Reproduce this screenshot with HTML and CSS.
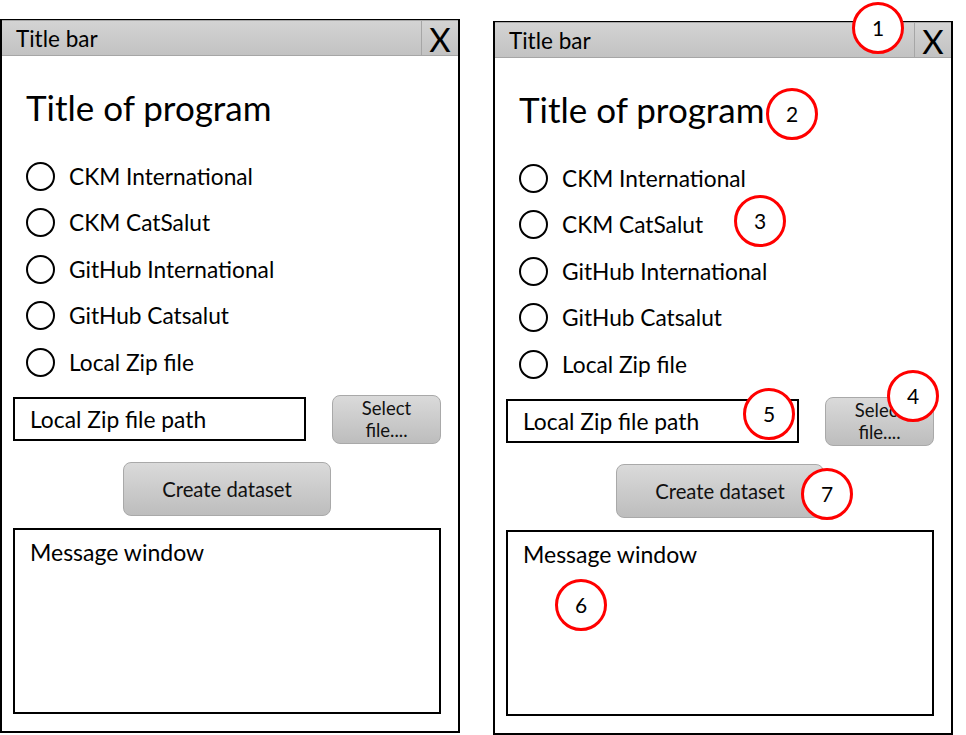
FILE: index.html
```html
<!DOCTYPE html>
<html lang="en">
<head>
<meta charset="utf-8">
<title>Mockup</title>
<link rel="stylesheet" href="styles.css">
</head>
<body>
<div class="stage">
  <section class="window w-left">
    <header class="titlebar"><span class="tb-text">Title bar</span><span class="close">X</span></header>
    <div class="content">
      <h1 class="app-title">Title of program</h1>
      <ul class="radios">
        <li><span class="radio"></span>CKM International</li>
        <li><span class="radio"></span>CKM CatSalut</li>
        <li><span class="radio"></span>GitHub International</li>
        <li><span class="radio"></span>GitHub Catsalut</li>
        <li><span class="radio"></span>Local Zip file</li>
      </ul>
      <div class="file-row">
        <div class="path">Local Zip file path</div>
        <div class="btn select">Select<br>file....</div>
      </div>
      <div class="create-row"><div class="btn create">Create dataset</div></div>
      <div class="messages">Message window</div>
    </div>
  </section>

  <section class="window w-right">
    <header class="titlebar"><span class="tb-text">Title bar</span><span class="close">X</span></header>
    <div class="content">
      <h1 class="app-title">Title of program</h1>
      <ul class="radios">
        <li><span class="radio"></span>CKM International</li>
        <li><span class="radio"></span>CKM CatSalut</li>
        <li><span class="radio"></span>GitHub International</li>
        <li><span class="radio"></span>GitHub Catsalut</li>
        <li><span class="radio"></span>Local Zip file</li>
      </ul>
      <div class="file-row">
        <div class="path">Local Zip file path</div>
        <div class="btn select">Select<br>file....</div>
      </div>
      <div class="create-row"><div class="btn create">Create dataset</div></div>
      <div class="messages">Message window</div>
    </div>
  </section>

  <span class="mark m1">1</span>
  <span class="mark m2">2</span>
  <span class="mark m3">3</span>
  <span class="mark m4">4</span>
  <span class="mark m5">5</span>
  <span class="mark m6">6</span>
  <span class="mark m7">7</span>
</div>
</body>
</html>
```

FILE: styles.css
```css
* { box-sizing: border-box; }
html, body { margin: 0; padding: 0; background: #fff; }
body {
  font-family: Lato, "Open Sans", sans-serif;
  color: #000;
}
.stage {
  position: relative;
  width: 966px;
  height: 735px;
  display: flex;
  align-items: flex-start;
  gap: 33px;
}
.window {
  width: 460px;
  height: 714px;
  border: 2px solid #000;
  display: flex;
  flex-direction: column;
  background: #fff;
}
.w-left { margin-top: 19px; }
.w-right { margin-top: 21px; }

.titlebar {
  height: 36px;
  display: flex;
  align-items: stretch;
  background: linear-gradient(#d3d3d3, #c2c2c2);
  border-bottom: 1px solid #a6a6a6;
  border-top: 1px solid #a6a6a6;
  margin-top: -1px;
}
.tb-text {
  flex: 1;
  padding-left: 14px;
  font-size: 22.5px;
  line-height: 35px;
}
.close {
  width: 37px;
  border-left: 1px solid #a6a6a6;
  text-align: center;
  font-size: 33px;
  line-height: 36px;
  font-weight: 400;
}

.content {
  padding: 0 17px 0 11px;
  display: flex;
  flex-direction: column;
}
.app-title {
  margin: 31px 0 0 13px;
  font-size: 35px;
  font-weight: 400;
  line-height: 40px;
}
.radios {
  list-style: none;
  margin: 26px 0 0 0;
  padding: 0;
}
.radios li {
  height: 46.5px;
  display: flex;
  align-items: center;
  font-size: 22.7px;
  padding-left: 13px;
}
.radio {
  width: 29px;
  height: 29px;
  border: 2px solid #000;
  border-radius: 50%;
  margin-right: 14px;
  flex: none;
}
.file-row {
  margin-top: 9px;
  height: 49px;
  display: flex;
  align-items: center;
  justify-content: space-between;
}
.path {
  width: 293px;
  height: 44px;
  border: 2px solid #000;
  padding-left: 15px;
  font-size: 22.8px;
  line-height: 40px;
}
.btn {
  background: linear-gradient(#dadada, #bdbdbd);
  border: 1px solid #a9a9a9;
  border-radius: 8px;
  text-align: center;
  color: #111;
}
.select {
  width: 109px;
  height: 49px;
  font-size: 18.5px;
  line-height: 22px;
  padding-top: 1px;
}
.create-row {
  margin-top: 18px;
  display: flex;
  justify-content: center;
}
.create {
  width: 208px;
  height: 54px;
  font-size: 20.3px;
  line-height: 52px;
}
.messages {
  margin-top: 12px;
  height: 186px;
  border: 2px solid #000;
  padding: 10px 15px;
  font-size: 23px;
  line-height: 24px;
}

.mark {
  position: absolute;
  width: 52px;
  height: 52px;
  border: 3px solid #f00;
  border-radius: 50%;
  background: #fff;
  font-size: 21px;
  line-height: 46px;
  text-align: center;
}
.m1 { left: 852px; top: 2px; }
.m2 { left: 766px; top: 88px; }
.m3 { left: 734px; top: 195px; }
.m4 { left: 887px; top: 370px; }
.m5 { left: 743px; top: 388px; }
.m6 { left: 555px; top: 579px; }
.m7 { left: 801px; top: 468px; }
```
